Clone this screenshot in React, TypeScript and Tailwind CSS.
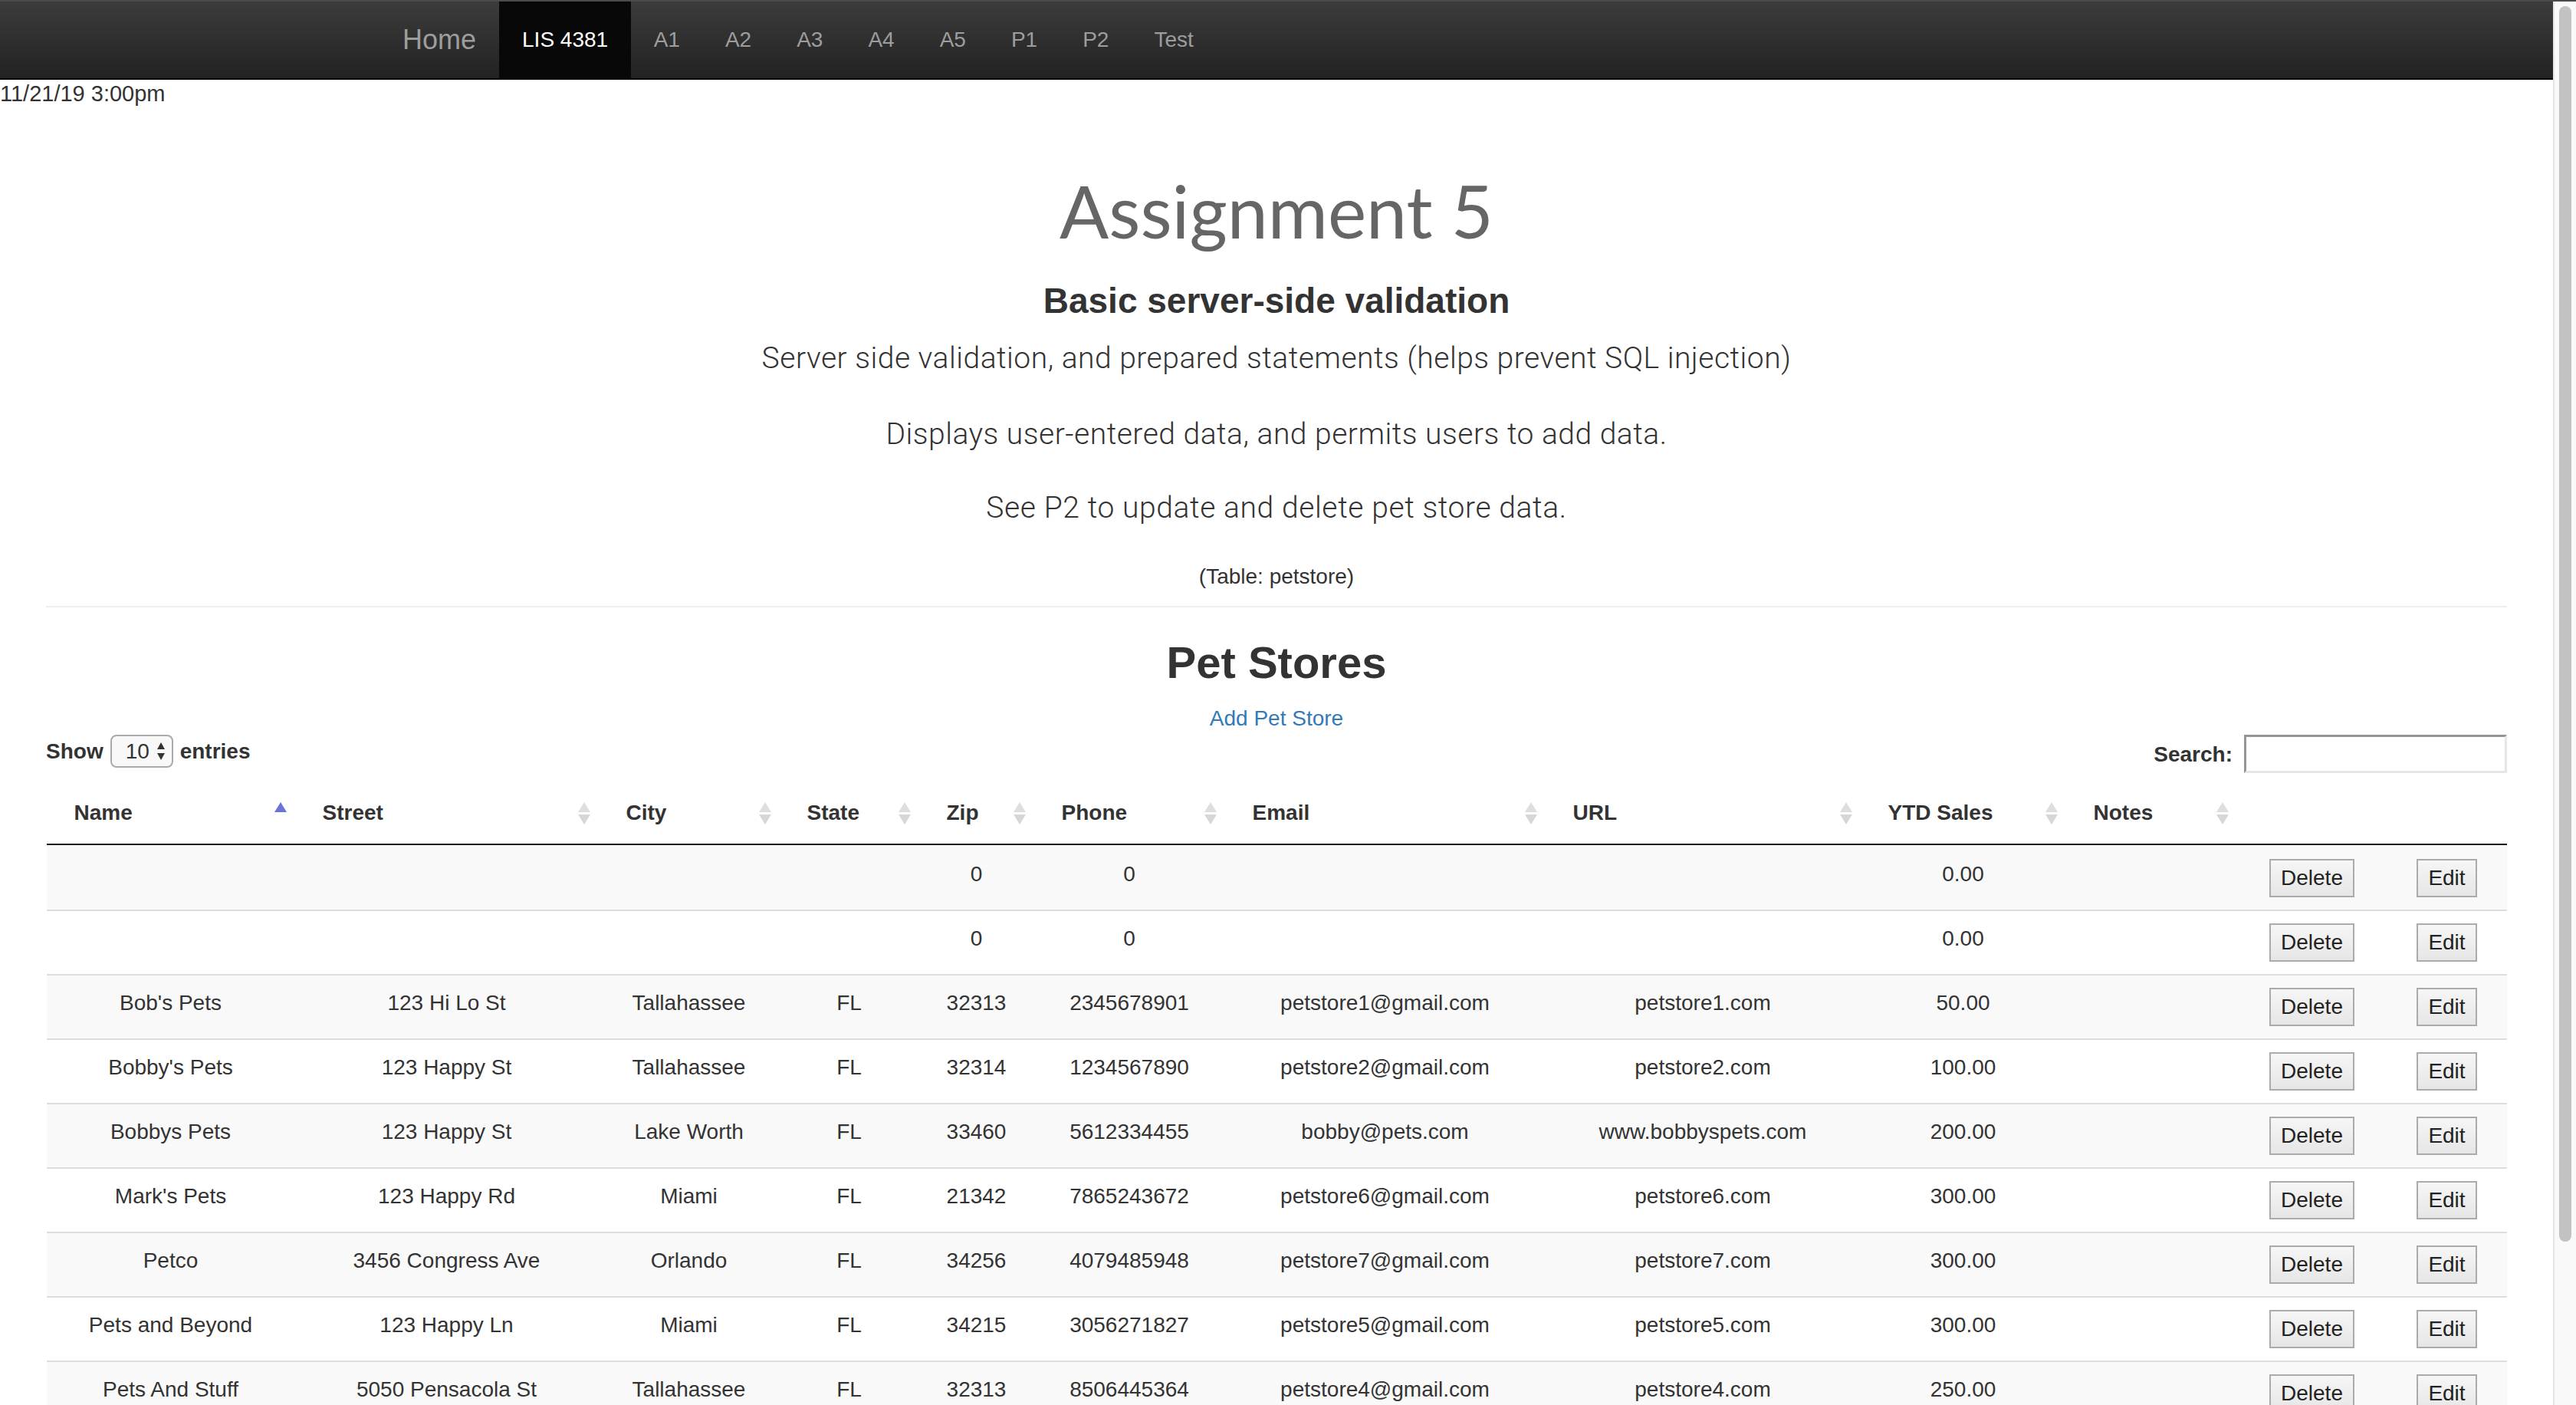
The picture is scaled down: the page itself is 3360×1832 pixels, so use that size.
import React from "react";

const navItems = ["A1", "A2", "A3", "A4", "A5", "P1", "P2", "Test"];

const columns = [
    { label: "Name", width: "w-[324px]", sort: "asc" },
    { label: "Street", width: "w-[396px]", sort: "both" },
    { label: "City", width: "w-[236px]", sort: "both" },
    { label: "State", width: "w-[182px]", sort: "both" },
    { label: "Zip", width: "w-[150px]", sort: "both" },
    { label: "Phone", width: "w-[249px]", sort: "both" },
    { label: "Email", width: "w-[418px]", sort: "both" },
    { label: "URL", width: "w-[411px]", sort: "both" },
    { label: "YTD Sales", width: "w-[268px]", sort: "both" },
    { label: "Notes", width: "w-[223px]", sort: "both" },
    { label: "", width: "w-[196px]", sort: "none" },
    { label: "", width: "w-[156px]", sort: "none" },
];

const stores = [
    ["", "", "", "", "0", "0", "", "", "0.00"],
    ["", "", "", "", "0", "0", "", "", "0.00"],
    ["Bob's Pets", "123 Hi Lo St", "Tallahassee", "FL", "32313", "2345678901", "petstore1@gmail.com", "petstore1.com", "50.00"],
    ["Bobby's Pets", "123 Happy St", "Tallahassee", "FL", "32314", "1234567890", "petstore2@gmail.com", "petstore2.com", "100.00"],
    ["Bobbys Pets", "123 Happy St", "Lake Worth", "FL", "33460", "5612334455", "bobby@pets.com", "www.bobbyspets.com", "200.00"],
    ["Mark's Pets", "123 Happy Rd", "Miami", "FL", "21342", "7865243672", "petstore6@gmail.com", "petstore6.com", "300.00"],
    ["Petco", "3456 Congress Ave", "Orlando", "FL", "34256", "4079485948", "petstore7@gmail.com", "petstore7.com", "300.00"],
    ["Pets and Beyond", "123 Happy Ln", "Miami", "FL", "34215", "3056271827", "petstore5@gmail.com", "petstore5.com", "300.00"],
    ["Pets And Stuff", "5050 Pensacola St", "Tallahassee", "FL", "32313", "8506445364", "petstore4@gmail.com", "petstore4.com", "250.00"],
];

function SortIcon({ sort }: { sort: string }) {
    if (sort === "none") return null;
    return (
        <svg width="18" height="32" viewBox="0 0 18 32" className="shrink-0">
            {sort === "asc" ? (
                <polygon points="1,15 9,2 17,15" fill="#6b72d8" />
            ) : (
                <>
                    <polygon points="1,15 9,2 17,15" fill="#dedede" />
                    <polygon points="1,18 17,18 9,31" fill="#d6d6d6" />
                </>
            )}
        </svg>
    );
}

function ActionButton({ label }: { label: string }) {
    return (
        <button className="h-[50px] px-[13px] border-2 border-[#ababab] bg-linear-to-b from-[#f6f6f6] to-[#e6e6e6] text-[28px] leading-[40px] text-[#222]">
            {label}
        </button>
    );
}

export default function App() {
    return (
        <div className="flex h-[1832px] w-[3360px] overflow-hidden bg-white font-['Liberation_Sans',Arial,sans-serif] text-[28px] text-[#333]">
            <div className="flex min-w-0 flex-1 flex-col">
                {/* Navbar */}
                <nav className="h-[104px] shrink-0 border-t-2 border-b-2 border-t-[#4b4b4b] border-b-[#080808] bg-linear-to-b from-[#3c3c3c] to-[#222]">
                    <div className="flex h-full pl-[495px]">
                        <a className="flex h-full items-center px-[30px] text-[36px] text-[#9d9d9d]">Home</a>
                        <a className="flex h-full items-center bg-[#080808] px-[30px] text-white">LIS 4381</a>
                        {navItems.map(item => (
                            <a key={item} className="flex h-full items-center px-[29.5px] text-[#9d9d9d]">
                                {item}
                            </a>
                        ))}
                    </div>
                </nav>

                <div className="text-[29px] leading-[36px]">11/21/19 3:00pm</div>

                <div className="flex flex-col items-center px-[60px] text-center">
                    <h1 className="mt-[74px] font-['Lato',sans-serif] text-[95px] leading-[120px] text-[#666]">Assignment 5</h1>
                    <h3 className="mt-[30px] text-[46px] font-bold leading-[56px]">Basic server-side validation</h3>
                    <p className="mt-[21px] font-['Roboto',sans-serif] text-[39px] font-light leading-[52px] tracking-[0.5px]">
                        Server side validation, and prepared statements (helps prevent SQL injection)
                    </p>
                    <p className="mt-[47px] font-['Roboto',sans-serif] text-[39px] font-light leading-[52px] tracking-[0.5px]">
                        Displays user-entered data, and permits users to add data.
                    </p>
                    <p className="mt-[44px] font-['Roboto',sans-serif] text-[39px] font-light leading-[52px] tracking-[0.6px]">
                        See P2 to update and delete pet store data.
                    </p>
                    <p className="mt-[44px] leading-[40px]">(Table: petstore)</p>

                    <div className="mt-[18px] h-[2px] w-full bg-[#eeeeee]" />

                    <h2 className="mt-[39px] text-[58px] font-bold leading-[66px]">Pet Stores</h2>
                    <a className="mt-[20px] leading-[40px] text-[#337ab7]">Add Pet Store</a>

                    {/* DataTables controls */}
                    <div className="mt-[1px] flex w-full items-start justify-between">
                        <div className="flex items-center font-bold leading-[43px]">
                            <span>Show</span>
                            <div className="mx-[9px] flex h-[43px] w-[82px] items-center justify-between rounded-[8px] border-2 border-[#aaaaaa] bg-[#f8f8f8] pl-[18px] pr-[8px] font-normal">
                                <span>10</span>
                                <svg width="12" height="26" viewBox="0 0 12 26">
                                    <polygon points="1,10 6,1 11,10" fill="#333" />
                                    <polygon points="1,15 11,15 6,24" fill="#333" />
                                </svg>
                            </div>
                            <span>entries</span>
                        </div>
                        <div className="flex items-center font-bold">
                            <span className="mr-[15px] mt-[1px]">Search:</span>
                            <input
                                type="text"
                                className="h-[50px] w-[343px] border-[3px] border-t-[#959595] border-l-[#959595] border-r-[#e6e6e6] border-b-[#e6e6e6] bg-white outline-none"
                            />
                        </div>
                    </div>

                    {/* Table */}
                    <table className="w-[3209px] table-fixed border-separate border-spacing-0 text-[28px]">
                        <colgroup>
                            {columns.map((c, i) => (
                                <col key={i} className={c.width} />
                            ))}
                        </colgroup>
                        <thead>
                            <tr>
                                {columns.map((c, i) => (
                                    <th
                                        key={i}
                                        className="border-b-2 border-[#111] pb-[20px] pl-[36px] pr-[10px] pt-[32px] text-left align-bottom font-bold leading-[40px]"
                                    >
                                        <div className="flex items-center justify-between">
                                            <span>{c.label}</span>
                                            <SortIcon sort={c.sort} />
                                        </div>
                                    </th>
                                ))}
                            </tr>
                        </thead>
                        <tbody>
                            {stores.map((row, r) => (
                                <tr key={r} className={r % 2 === 0 ? "bg-[#f9f9f9]" : "bg-white"}>
                                    {[...row, ""].map((cell, c) => (
                                        <td
                                            key={c}
                                            className={`h-[84px] border-t-2 pt-[16px] text-center align-top leading-[40px] ${
                                                r === 0 ? "border-transparent" : "border-[#dddddd]"
                                            }`}
                                        >
                                            {cell}
                                        </td>
                                    ))}
                                    <td className={`h-[84px] border-t-2 pt-[16px] text-center align-top ${r === 0 ? "border-transparent" : "border-[#dddddd]"}`}>
                                        <ActionButton label="Delete" />
                                    </td>
                                    <td className={`h-[84px] border-t-2 pt-[16px] text-center align-top ${r === 0 ? "border-transparent" : "border-[#dddddd]"}`}>
                                        <ActionButton label="Edit" />
                                    </td>
                                </tr>
                            ))}
                        </tbody>
                    </table>
                </div>
            </div>

            {/* Scrollbar */}
            <div className="flex w-[30px] shrink-0 flex-col border-t-2 border-t-[#4b4b4b]">
                <div className="flex flex-1 border-l-2 border-l-[#e6e6e6] bg-[#f9f9f9] pl-[6px] pt-[6px]">
                    <div className="h-[1611px] w-[16px] rounded-full bg-[#c2c2c2]" />
                </div>
            </div>
        </div>
    );
}
